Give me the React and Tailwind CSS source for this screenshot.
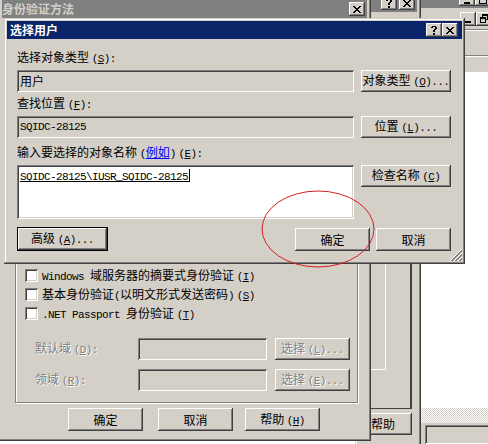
import React from "react";

const face = "bg-[#d4d0c8]";
const raised =
  "shadow-[inset_-1px_-1px_#404040,inset_1px_1px_#ffffff,inset_-2px_-2px_#808080,inset_2px_2px_#d4d0c8]";
const defBtn =
  "shadow-[inset_0_0_0_1px_#000000,inset_-2px_-2px_#404040,inset_2px_2px_#ffffff,inset_-3px_-3px_#808080]";
const sunken =
  "shadow-[inset_1px_1px_#808080,inset_-1px_-1px_#ffffff,inset_2px_2px_#404040,inset_-2px_-2px_#d4d0c8]";
const win =
  "bg-[#d4d0c8] shadow-[inset_-1px_-1px_#404040,inset_1px_1px_#d4d0c8,inset_-2px_-2px_#808080,inset_2px_2px_#ffffff]";
const etched = "border border-[#808080] shadow-[inset_1px_1px_#ffffff,1px_1px_#ffffff]";
const gray = "text-[#808080] [text-shadow:1px_1px_0_#ffffff]";

// latin text at simsun width (6px per char)
function L({ children, className = "" }) {
  return (
    <span className={`font-['Liberation_Mono',monospace] text-[11px] tracking-[-0.6px] ${className}`}>
      {children}
    </span>
  );
}

function K({ k }) {
  return (
    <L>
      (<u>{k}</u>)
    </L>
  );
}

function Button({ children, className = "", def, disabled }) {
  return (
    <div
      className={`flex items-center justify-center leading-none ${face} ${def ? defBtn : raised} ${
        disabled ? gray : "text-black"
      } ${className}`}
    >
      <span className="whitespace-pre">{children}</span>
    </div>
  );
}

function CapBtn({ kind }) {
  return (
    <div className={`w-[16px] h-[14px] ${face} ${raised} flex items-center justify-center`}>
      <svg width="8" height="9" viewBox="0 0 8 9" shapeRendering="crispEdges" fill="#000">
        {kind === "x" && (
          <path d="M0 1h2v1h-2zM6 1h2v1h-2zM1 2h2v1h-2zM5 2h2v1h-2zM2 3h4v1h-4zM3 4h2v1h-2zM2 5h4v1h-4zM1 6h2v1h-2zM5 6h2v1h-2zM0 7h2v1h-2zM6 7h2v1h-2z" />
        )}
        {kind === "help" && (
          <path d="M2 0h4v1h-4zM1 1h2v1h-2zM5 1h2v2h-2zM4 3h2v1h-2zM3 4h2v2h-2zM3 7h2v2h-2z" />
        )}
        {kind === "min" && <path d="M1 7h6v2h-6z" />}
        {kind === "max" && <path d="M0 0h8v2h-8zM0 2h1v7h-1zM7 2h1v7h-1zM0 8h8v1h-8z" />}
        {kind === "restore" && (
          <path d="M2 0h6v2h-6zM7 2h1v4h-1zM6 5h1v1h-1zM0 3h6v2h-6zM0 5h1v4h-1zM5 5h1v4h-1zM0 8h6v1h-6zM2 2h1v1h-1z" />
        )}
      </svg>
    </div>
  );
}

function Check() {
  return <div className={`w-[13px] h-[13px] shrink-0 bg-white ${sunken}`} />;
}

function Grip() {
  return (
    <svg width="12" height="12" viewBox="0 0 12 12" shapeRendering="crispEdges">
      {[0, 4, 8].map((o) => (
        <g key={o}>
          <path d={`M${o} 12 L12 ${o}`} stroke="#ffffff" strokeWidth="1" />
          <path d={`M${o + 1} 12 L12 ${o + 1}`} stroke="#808080" strokeWidth="1" />
          <path d={`M${o + 2} 12 L12 ${o + 2}`} stroke="#808080" strokeWidth="1" />
        </g>
      ))}
    </svg>
  );
}

export default function App() {
  return (
    <div className="relative w-[488px] h-[444px] overflow-hidden bg-white text-[12px] leading-none text-black font-['Noto_Sans_CJK_SC','Noto_Sans',sans-serif]">
      {/* back-most window (mmc) */}
      <div className={`absolute left-[417px] top-[-14px] w-[90px] h-[462px] p-[4px] flex flex-col ${win}`}>
        <div className="h-[18px] shrink-0 bg-[#808080] flex items-center pl-[38px]">
          <CapBtn kind="min" />
          <CapBtn kind="max" />
        </div>
        <div className="h-[22px] shrink-0 flex items-center pl-[39px] border-b border-[#808080] shadow-[0_1px_#ffffff]">
          <CapBtn kind="min" />
          <CapBtn kind="restore" />
        </div>
        <div className="h-[26px] shrink-0 border-b border-[#808080] shadow-[0_1px_#ffffff]" />
        <div className="h-[16px] shrink-0" />
        <div className="flex-1 bg-white" />
        <div className="h-[15px] shrink-0 bg-[repeating-conic-gradient(#d4d0c8_0_25%,#ffffff_0_50%)] bg-[length:2px_2px]" />
        <div className="h-[21px] shrink-0 pl-[4px] pt-[2px]">
          <div className={`h-full ${sunken}`} />
        </div>
      </div>

      {/* middle window */}
      <div className={`absolute left-[355px] top-[-10px] w-[66px] h-[460px] p-[4px] flex flex-col ${win}`}>
        <div className="h-[18px] shrink-0 bg-[#808080] flex items-center justify-end pr-[2px]">
          <CapBtn kind="help" />
          <div className="w-[2px]" />
          <CapBtn kind="x" />
        </div>
        <div className="mt-[20px] h-[377px] mr-[5px] shrink-0 border-r-2 border-b border-[#404040] flex flex-col">
          <div className="h-[338px] mr-[24px] border-r border-b border-[#ffffff]" />
        </div>
        <div className="mt-[4px] mr-[5px] flex justify-end">
          <Button className="w-[45px] h-[22px] justify-start pl-[4px]">帮助</Button>
        </div>
      </div>

      {/* 身份验证方法 */}
      <div className={`absolute left-[-2px] top-[-4px] w-[373px] h-[445px] p-[4px] flex flex-col ${win}`}>
        <div className="h-[18px] shrink-0 bg-[#808080] flex items-center pr-[2px]">
          <span className="font-bold text-[#d4d0c8]">身份验证方法</span>
          <div className="ml-auto">
            <CapBtn kind="x" />
          </div>
        </div>
        <div className={`mt-[30px] ml-[13px] mr-[9px] flex-1 flex flex-col justify-end pb-[11px] ${etched}`}>
          <div className="flex flex-col gap-[6px] pl-[9px]">
            <div className="flex items-center gap-[4px] h-[13px]">
              <Check />
              <span className="whitespace-pre">
                <L>Windows </L>域服务器的摘要式身份验证 <K k="I" />
              </span>
            </div>
            <div className="flex items-center gap-[4px] h-[13px]">
              <Check />
              <span className="whitespace-pre">
                基本身份验证<L>(</L>以明文形式发送密码<L>)</L> <K k="S" />
              </span>
            </div>
            <div className="flex items-center gap-[4px] h-[13px]">
              <Check />
              <span className="whitespace-pre">
                <L>.NET Passport </L>身份验证 <K k="T" />
              </span>
            </div>
          </div>
          <div className="mt-[18px] flex items-center h-[22px] pl-[19px]">
            <span className={`w-[103px] whitespace-pre ${gray}`}>
              默认域 <K k="D" />
              <L>:</L>
            </span>
            <div className={`w-[129px] h-[22px] ${sunken}`} />
            <Button disabled className="ml-[8px] w-[75px] h-[22px]">
              选择 <K k="L" />
              <L>...</L>
            </Button>
          </div>
          <div className="mt-[9px] flex items-center h-[22px] pl-[19px]">
            <span className={`w-[103px] whitespace-pre ${gray}`}>
              领域 <K k="R" />
              <L>:</L>
            </span>
            <div className={`w-[129px] h-[22px] ${sunken}`} />
            <Button disabled className="ml-[8px] w-[75px] h-[22px]">
              选择 <K k="E" />
              <L>...</L>
            </Button>
          </div>
        </div>
        <div className="mt-[5px] mb-[6px] flex pl-[66px]">
          <Button className="w-[75px] h-[23px]">确定</Button>
          <Button className="ml-[15px] w-[75px] h-[23px]">取消</Button>
          <Button className="ml-[12px] w-[75px] h-[23px]">
            帮助 <K k="H" />
          </Button>
        </div>
      </div>

      {/* 选择用户 */}
      <div className={`absolute left-[4px] top-[18px] w-[461px] h-[246px] p-[3px] flex flex-col ${win}`}>
        <div className="h-[18px] shrink-0 bg-[#0a246a] flex items-center pl-[3px] pr-[4px]">
          <span className="font-bold text-white">选择用户</span>
          <div className="ml-auto flex">
            <CapBtn kind="help" />
            <CapBtn kind="x" />
          </div>
        </div>
        <div className="flex flex-col pl-[10px]">
          <div className="mt-[12px] h-[12px] leading-[12px] whitespace-pre">
            选择对象类型 <K k="S" />
            <L>:</L>
          </div>
          <div className="mt-[7px] flex gap-[7px]">
            <div className={`w-[337px] h-[22px] flex items-center pl-[3px] ${sunken}`}>用户</div>
            <Button className="w-[90px] h-[22px]">
              对象类型 <K k="O" />
              <L>...</L>
            </Button>
          </div>
          <div className="mt-[5px] h-[12px] leading-[12px] whitespace-pre">
            查找位置 <K k="F" />
            <L>:</L>
          </div>
          <div className="mt-[7px] flex gap-[7px]">
            <div className={`w-[337px] h-[22px] flex items-center pl-[3px] ${sunken}`}>
              <L>SQIDC-28125</L>
            </div>
            <Button className="w-[90px] h-[22px]">
              位置 <K k="L" />
              <L>...</L>
            </Button>
          </div>
          <div className="mt-[8px] h-[12px] leading-[12px] whitespace-pre">
            输入要选择的对象名称 <L>(</L>
            <span className="text-[#0000ff] underline">例如</span>
            <L>)</L> <K k="E" />
            <L>:</L>
          </div>
          <div className="mt-[7px] flex gap-[7px] items-start">
            <div className={`w-[337px] h-[54px] bg-white pl-[3px] pt-[4px] ${sunken}`}>
              <span className="inline-block h-[13px] border-r border-b border-black pr-[1px]">
                <L className="underline">SQIDC-28125\IUSR_SQIDC-28125</L>
              </span>
            </div>
            <Button className="w-[90px] h-[22px]">
              检查名称 <K k="C" />
            </Button>
          </div>
          <div className="mt-[8px] flex">
            <Button def className="w-[91px] h-[24px]">
              高级 <K k="A" />
              <L>...</L>
            </Button>
            <Button className="ml-[187px] mt-[1px] w-[75px] h-[23px]">确定</Button>
            <Button className="ml-[6px] mt-[1px] w-[75px] h-[23px]">取消</Button>
          </div>
        </div>
        <div className="absolute right-[3px] bottom-[3px]">
          <Grip />
        </div>
      </div>

      {/* red circle annotation */}
      <svg className="absolute left-0 top-0" width="488" height="444">
        <ellipse cx="318" cy="229" rx="56" ry="38" fill="none" stroke="#d42020" strokeWidth="1" />
      </svg>
    </div>
  );
}
